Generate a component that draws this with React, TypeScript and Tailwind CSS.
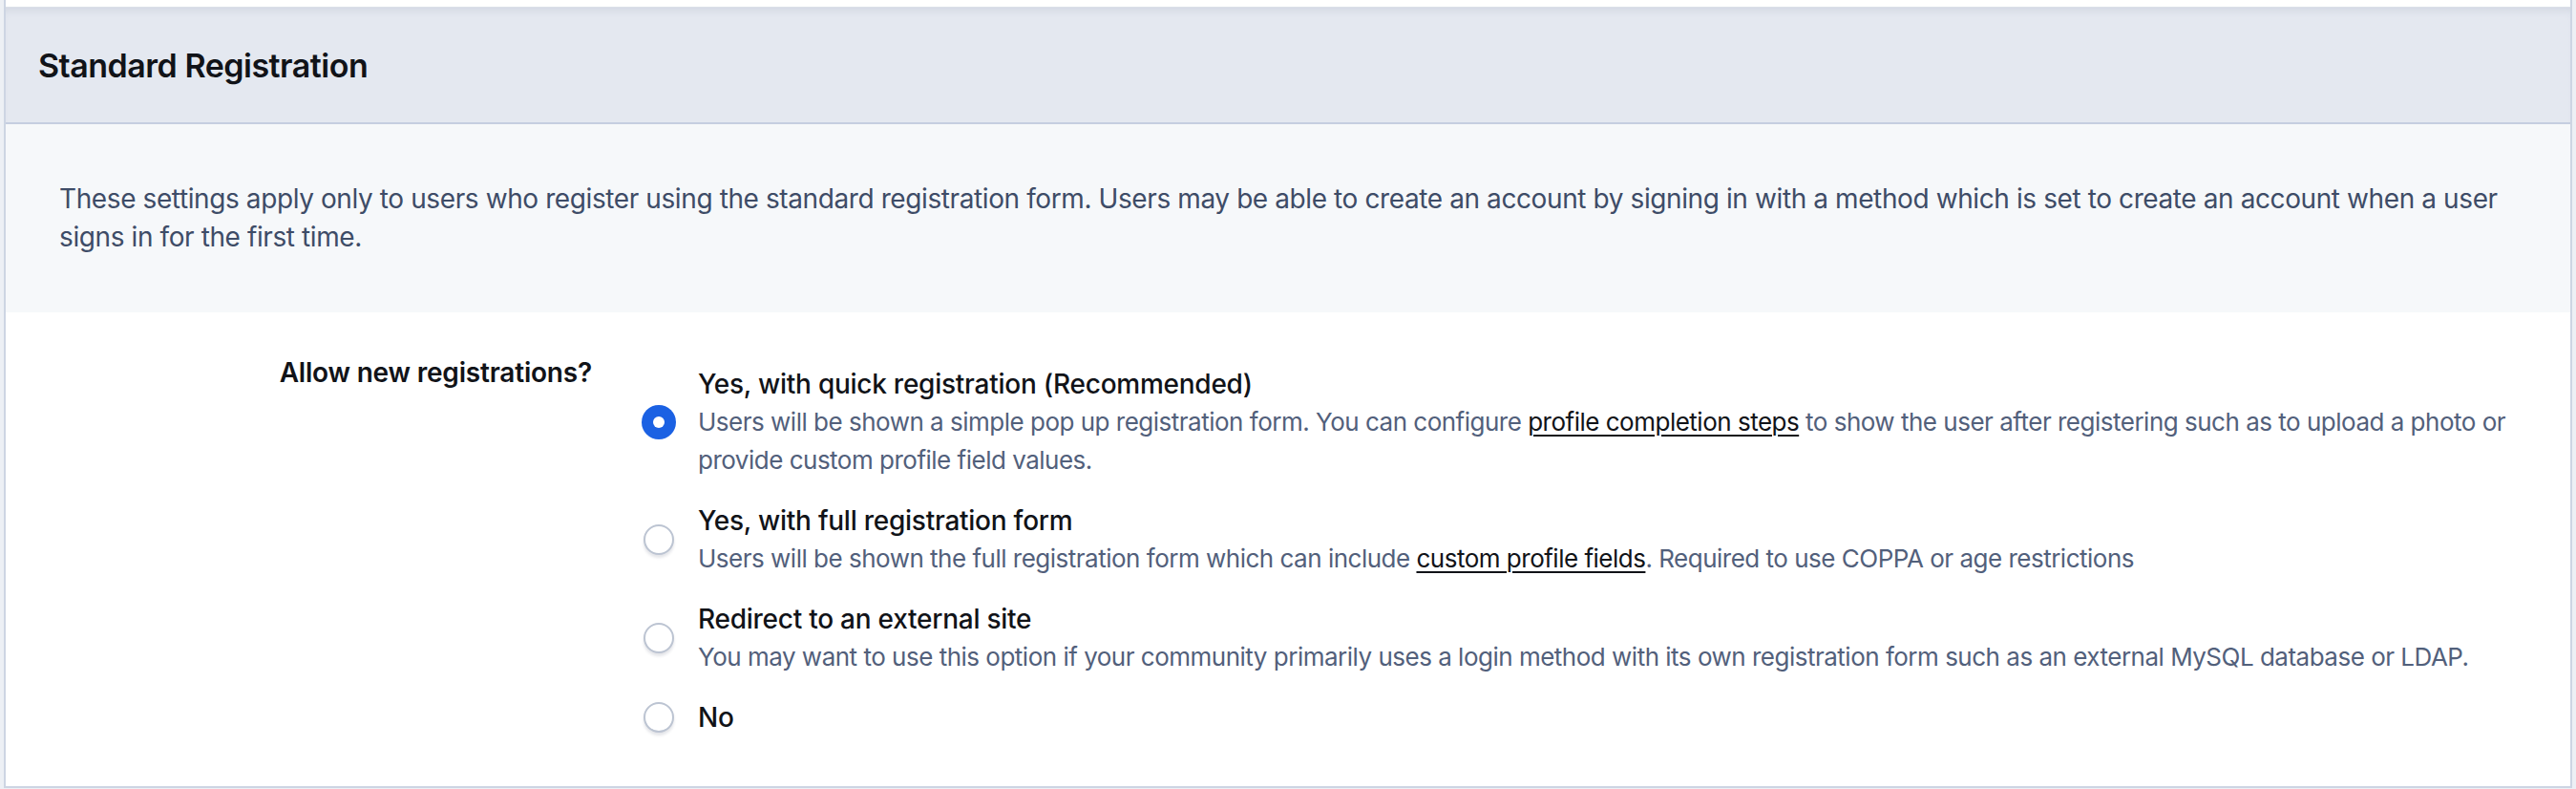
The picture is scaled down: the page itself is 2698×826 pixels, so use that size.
import React from "react";

type Option = {
  id: string;
  title: string;
  body?: React.ReactNode;
};

const linkClass = "text-[#111318] underline underline-offset-[4px] decoration-[2px]";

const options: Option[] = [
  {
    id: "quick",
    title: "Yes, with quick registration (Recommended)",
    body: (
      <>
        Users will be shown a simple pop up registration form. You can configure{" "}
        <a href="#" className={linkClass}>
          profile completion steps
        </a>{" "}
        to show the user after registering such as to upload a photo or provide custom profile field values.
      </>
    ),
  },
  {
    id: "full",
    title: "Yes, with full registration form",
    body: (
      <>
        Users will be shown the full registration form which can include{" "}
        <a href="#" className={linkClass}>
          custom profile fields
        </a>
        . Required to use COPPA or age restrictions
      </>
    ),
  },
  {
    id: "redirect",
    title: "Redirect to an external site",
    body: "You may want to use this option if your community primarily uses a login method with its own registration form such as an external MySQL database or LDAP.",
  },
  { id: "no", title: "No" },
];

function Radio({ checked }: { checked: boolean }) {
  return (
    <span className="flex h-[36px] w-[36px] shrink-0 items-center justify-center">
      {checked ? (
        <span className="flex h-[36px] w-[36px] items-center justify-center rounded-full bg-[#1b61e3]">
          <span className="h-[12px] w-[12px] rounded-full bg-white" />
        </span>
      ) : (
        <span className="h-[32px] w-[32px] rounded-full border-2 border-[#bcc4d2] bg-white shadow-[0_3px_3px_rgba(30,40,70,0.12)]" />
      )}
    </span>
  );
}

export default function App() {
  const selected = "quick";

  return (
    <div className="min-h-screen bg-[#edf0f5] px-[4px] font-['Inter',sans-serif]">
      <div className="border-x-2 border-b-2 border-[#cdd5e3] bg-white">
        <div className="h-[7px] bg-white" />
        <div className="flex h-[123px] items-center border-t border-b-2 border-t-[#dbe0e8] border-b-[#c5cee0] bg-[#e4e8f0] px-[34px] shadow-[inset_0_8px_10px_-6px_rgba(60,75,110,0.12)]">
          <h2 className="text-[34px] font-semibold tracking-[-0.5px] text-[#111318]">Standard Registration</h2>
        </div>

        <div className="bg-[#f6f8fa] pt-[58px] pb-[59px] pl-[56px] pr-[50px]">
          <p className="text-[28px] leading-[40px] tracking-[-0.4px] text-[#3e4c67]">
            These settings apply only to users who register using the standard registration form. Users may be able to
            create an account by signing in with a method which is set to create an account when a user signs in for the
            first time.
          </p>
        </div>

        <div className="flex pt-[43px] pb-[52px] pr-[50px]">
          <div className="w-[614px] shrink-0 text-right text-[28px] font-semibold leading-[40px] tracking-[-0.2px] text-[#111318]">
            Allow new registrations?
          </div>
          <div className="ml-[52px] flex flex-1 flex-col gap-[23px] pt-[12px]">
            {options.map((o) => (
              <label key={o.id} className="flex items-center gap-[23px]">
                <Radio checked={o.id === selected} />
                <div>
                  <div className="text-[28px] font-medium leading-[40px] tracking-[-0.25px] text-[#111318]">{o.title}</div>
                  {o.body && (
                    <div className="text-[26px] leading-[40px] tracking-[-0.5px] text-[#52607b]">{o.body}</div>
                  )}
                </div>
              </label>
            ))}
          </div>
        </div>
      </div>
    </div>
  );
}
